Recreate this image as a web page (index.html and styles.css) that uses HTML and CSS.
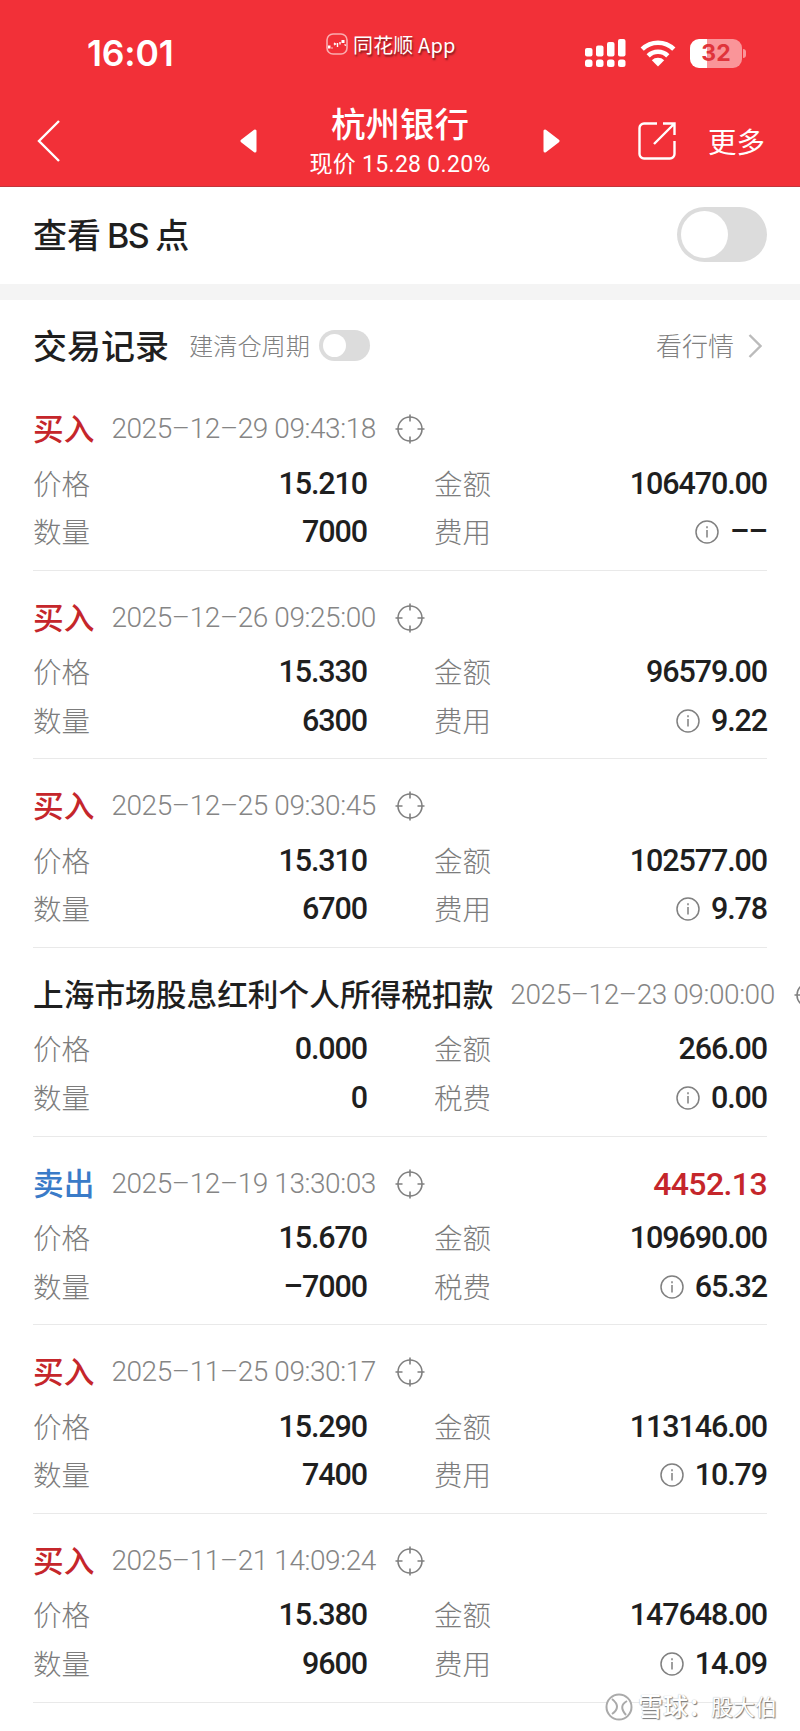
FILE: index.html
```html
<!DOCTYPE html>
<html lang="zh-CN">
<head>
    <meta charset="UTF-8">
    <title>交易记录</title>
    <link rel="stylesheet" href="styles.css">
</head>
<body>
<svg class="defs">
    <symbol id="aim" viewBox="0 0 30 30">
        <circle cx="15" cy="15" r="12"/>
        <path d="M15 .5v7M15 22.5v7M.5 15h7M22.5 15h7"/>
    </symbol>
    <symbol id="info" viewBox="0 0 24 24">
        <circle cx="12" cy="12" r="11"/>
        <path d="M12 10v7.5M12 6.2v2"/>
    </symbol>
</svg>
<header class="header">
    <div class="status">
        <span class="clock">16:01</span>
        <div class="app">
            <svg class="app-icon" viewBox="0 0 22 22"><rect x="1" y="1" width="20" height="20" rx="6" fill="none" stroke="#fff" stroke-opacity=".6" stroke-width="1.6"/><path d="M2 12.5h2.5v3H2zM15.5 7h3v3h-3z" fill="#fff"/><path d="M6 14.5v1M8 10l1.5 1L8 12M11.5 10v4M14 9v2.5M18.5 11.5l1.5 1" fill="none" stroke="#fff" stroke-width="1.4"/></svg>
            <span>同花顺 App</span>
        </div>
        <div class="signals">
            <svg class="cell" viewBox="0 0 41 29" fill="#fff"><rect y="9" width="7.5" height="8.5" rx="2"/><rect x="11" y="6.5" width="7.5" height="11" rx="2"/><rect x="22" y="3" width="7.5" height="14.5" rx="2"/><rect x="33" width="7.5" height="17.5" rx="2"/><rect y="20.5" width="7.5" height="7.5" rx="2.5"/><rect x="11" y="20.5" width="7.5" height="7.5" rx="2.5"/><rect x="22" y="20.5" width="7.5" height="7.5" rx="2.5"/><rect x="33" y="20.5" width="7.5" height="7.5" rx="2.5"/></svg>
            <svg class="wifi" viewBox="0 0 36 27"><path d="M2.2 9.2a22.5 22.5 0 0 1 31.6 0M8.2 15.8a14 14 0 0 1 19.6 0" fill="none" stroke="#fff" stroke-width="4.6"/><path d="M11.8 20.3a9 9 0 0 1 12.4 0L18 26.5z" fill="#fff"/></svg>
            <div class="battery">32</div>
            <i class="battery-cap"></i>
        </div>
    </div>
    <div class="nav">
        <svg class="back" viewBox="0 0 24 42"><path d="M22 1L2 21l20 20"/></svg>
        <svg class="tri" viewBox="0 0 17 24"><path d="M15 2v20L2 12z"/></svg>
        <div class="stock">
            <h1>杭州银行</h1>
            <p>现价 15.28 0.20%</p>
        </div>
        <svg class="tri" viewBox="0 0 17 24"><path d="M2 2v20l13-10z"/></svg>
        <svg class="share" viewBox="0 0 38 38"><path d="M19 1.5H6a4.5 4.5 0 0 0-4.5 4.5v26A4.5 4.5 0 0 0 6 36.5h26a4.5 4.5 0 0 0 4.5-4.5V19M25 1.5h11.5V13M36.5 1.5L16 22"/></svg>
        <span class="more">更多</span>
    </div>
</header>
<div class="bs">
    <h2>查看<span class="latin">BS</span>点</h2>
    <div class="switch"></div>
</div>
<section class="records">
    <div class="records-head">
        <h2>交易记录</h2>
        <span class="cycle">建清仓周期</span>
        <div class="switch small"></div>
        <span class="quote">看行情</span>
        <svg class="arrow" viewBox="0 0 14 24"><path d="M1.5 1l11 11-11 11"/></svg>
    </div>

    <div class="record">
        <div class="title"><b class="buy">买入</b><time>2025–12–29 09:43:18</time><svg class="aim"><use href="#aim"/></svg></div>
        <div class="row"><span>价格</span><em>15.210</em><span>金额</span><em>106470.00</em></div>
        <div class="row"><span>数量</span><em>7000</em><span>费用</span><em><svg class="info"><use href="#info"/></svg>––</em></div>
    </div>
    <div class="record">
        <div class="title"><b class="buy">买入</b><time>2025–12–26 09:25:00</time><svg class="aim"><use href="#aim"/></svg></div>
        <div class="row"><span>价格</span><em>15.330</em><span>金额</span><em>96579.00</em></div>
        <div class="row"><span>数量</span><em>6300</em><span>费用</span><em><svg class="info"><use href="#info"/></svg>9.22</em></div>
    </div>
    <div class="record">
        <div class="title"><b class="buy">买入</b><time>2025–12–25 09:30:45</time><svg class="aim"><use href="#aim"/></svg></div>
        <div class="row"><span>价格</span><em>15.310</em><span>金额</span><em>102577.00</em></div>
        <div class="row"><span>数量</span><em>6700</em><span>费用</span><em><svg class="info"><use href="#info"/></svg>9.78</em></div>
    </div>
    <div class="record">
        <div class="title"><b>上海市场股息红利个人所得税扣款</b><time>2025–12–23 09:00:00</time><svg class="aim"><use href="#aim"/></svg></div>
        <div class="row"><span>价格</span><em>0.000</em><span>金额</span><em>266.00</em></div>
        <div class="row"><span>数量</span><em>0</em><span>税费</span><em><svg class="info"><use href="#info"/></svg>0.00</em></div>
    </div>
    <div class="record">
        <div class="title"><b class="sell">卖出</b><time>2025–12–19 13:30:03</time><svg class="aim"><use href="#aim"/></svg><strong class="profit">4452.13</strong></div>
        <div class="row"><span>价格</span><em>15.670</em><span>金额</span><em>109690.00</em></div>
        <div class="row"><span>数量</span><em>–7000</em><span>税费</span><em><svg class="info"><use href="#info"/></svg>65.32</em></div>
    </div>
    <div class="record">
        <div class="title"><b class="buy">买入</b><time>2025–11–25 09:30:17</time><svg class="aim"><use href="#aim"/></svg></div>
        <div class="row"><span>价格</span><em>15.290</em><span>金额</span><em>113146.00</em></div>
        <div class="row"><span>数量</span><em>7400</em><span>费用</span><em><svg class="info"><use href="#info"/></svg>10.79</em></div>
    </div>
    <div class="record">
        <div class="title"><b class="buy">买入</b><time>2025–11–21 14:09:24</time><svg class="aim"><use href="#aim"/></svg></div>
        <div class="row"><span>价格</span><em>15.380</em><span>金额</span><em>147648.00</em></div>
        <div class="row"><span>数量</span><em>9600</em><span>费用</span><em><svg class="info"><use href="#info"/></svg>14.09</em></div>
    </div>
</section>
<div class="watermark">
    <svg viewBox="0 0 28 28"><circle cx="14" cy="14" r="12.5"/><path d="M7 6q10 8 0 15M22 8q-9 5-1 14"/></svg>
    <span>雪球：</span><span class="author">股大伯</span>
</div>
</body>
</html>
```
FILE: styles.css
```css
* {
    box-sizing: border-box;
}
body {
    margin: 0;
    width: 800px;
    height: 1731px;
    overflow: hidden;
    position: relative;
    background-color: #fff;
    color: #1f1f1f;
    font-family: "Noto Sans CJK SC", sans-serif;
}
h1, h2, p {
    margin: 0;
    font-weight: 500;
}
svg {
    display: block;
    flex: none;
}
.defs {
    position: absolute;
    width: 0;
    height: 0;
}

/* 顶部 */
.header {
    height: 187px;
    background-color: #f23038;
    border-bottom: 1px solid #c2353b;
    color: #fff;
}
.status {
    height: 96px;
    display: flex;
    align-items: flex-start;
}
.clock {
    width: 238px;
    padding-left: 87px;
    margin-top: 34px;
    font: 600 35.5px/40px Inter, sans-serif;
    letter-spacing: -.2px;
}
.app {
    display: flex;
    align-items: center;
    margin: 30px 0 0 88px;
    width: 259px;
    height: 30px;
    font-size: 20px;
    line-height: 30px;
    letter-spacing: .15px;
    text-shadow: 1px 2px 2px rgba(0, 0, 0, .5);
    white-space: nowrap;
}
.app-icon {
    width: 22px;
    height: 22px;
    margin-right: 5px;
    margin-bottom: 2px;
}
.signals {
    display: flex;
    align-items: center;
    height: 29px;
    margin-top: 39px;
}
.cell {
    width: 41px;
    height: 29px;
}
.wifi {
    width: 36px;
    height: 27px;
    margin-left: 14px;
}
.battery {
    width: 52px;
    height: 29px;
    margin-left: 14px;
    border-radius: 9px;
    background: linear-gradient(90deg, #fff 17px, #fa9599 17px);
    color: #e0343b;
    font: 700 23px/29px Inter, sans-serif;
    text-align: center;
}
.battery-cap {
    width: 3px;
    height: 9px;
    margin-left: 1px;
    border-radius: 0 4px 4px 0;
    background-color: #fa9599;
}
.nav {
    height: 90px;
    display: flex;
    align-items: center;
    padding-left: 37px;
}
.nav svg {
    fill: none;
    stroke: #fff;
    stroke-width: 2.4;
}
.nav .back {
    width: 24px;
    height: 42px;
}
.nav .tri {
    width: 17px;
    height: 24px;
    fill: #fff;
    stroke-linejoin: round;
    stroke-width: 3;
    margin-left: 179px;
}
.stock {
    width: 200px;
    margin-left: 43px;
    padding-top: 4px;
    text-align: center;
}
.stock h1 {
    font-size: 34.5px;
    line-height: 42px;
}
.stock p {
    font: 400 23px/43px Roboto, "Noto Sans CJK SC", sans-serif;
    white-space: nowrap;
    letter-spacing: .3px;
}
.nav .stock + .tri {
    margin-left: 43px;
}
.share {
    width: 38px;
    height: 38px;
    margin-left: 78px;
}
.more {
    margin-left: 32px;
    font-size: 28.5px;
    line-height: 40px;
}

/* 开关 */
.bs {
    height: 113px;
    display: flex;
    justify-content: space-between;
    align-items: flex-start;
    padding: 20px 33px 0 33px;
    border-bottom: 16px solid #f4f4f4;
}
h2 {
    font-size: 34px;
    line-height: 54px;
}
.latin {
    margin: 0 7px 0 6px;
    font: 500 34px/1 Inter, sans-serif;
    letter-spacing: -1.5px;
}
.switch {
    width: 90px;
    height: 55px;
    padding: 4px;
    border-radius: 28px;
    background-color: #dcdcdc;
}
.switch::before {
    content: "";
    display: block;
    width: 47px;
    height: 47px;
    border-radius: 50%;
    background-color: #fff;
}
.switch.small {
    width: 51px;
    height: 31px;
    margin-left: 9px;
}
.switch.small::before {
    width: 23px;
    height: 23px;
}

/* 交易记录 */
.records {
    padding: 0 33px;
}
.records-head {
    height: 82px;
    display: flex;
    align-items: center;
    padding-top: 9px;
    color: #808080;
}
.records-head h2 {
    color: #1f1f1f;
    line-height: 50px;
    padding-bottom: 2px;
}
.cycle {
    margin-left: 20px;
    padding-bottom: 3px;
    font-size: 24.2px;
    font-weight: 300;
}
.quote {
    margin-left: auto;
    padding-bottom: 3px;
    font-size: 26px;
    font-weight: 300;
}
.arrow {
    width: 14px;
    height: 24px;
    margin: 0 5px 0 14px;
    fill: none;
    stroke: #bbb;
    stroke-width: 2.4;
}
.record {
    height: 188.66px;
    padding-top: 22px;
    border-bottom: 1px solid #e9e9e9;
}
.title {
    height: 50px;
    display: flex;
    align-items: center;
    white-space: nowrap;
}
.title b {
    padding-bottom: 5px;
    font-size: 30.7px;
    font-weight: 500;
    line-height: 45px;
}
.title .buy {
    color: #c5262b;
}
.title .sell {
    color: #3a7bc8;
}
.title time {
    flex: none;
    width: 268px;
    margin-left: 17px;
    color: #858585;
    font: 300 28px/50px Roboto, sans-serif;
    letter-spacing: -.42px;
}
.aim {
    width: 30px;
    height: 30px;
    margin-left: 16px;
    fill: none;
    stroke: #808080;
    stroke-width: 1.6;
}
.profit {
    margin-left: auto;
    color: #c5262b;
    font: 500 32px/50px Roboto, sans-serif;
    letter-spacing: -.6px;
}
.row {
    height: 48.5px;
    display: grid;
    grid-template-columns: 100px 234px 167px 1fr;
    align-items: center;
    padding-top: 5.5px;
}
.row > span {
    padding-bottom: 3px;
    color: #7c7c7c;
    font-size: 28.5px;
    font-weight: 300;
    line-height: 45px;
}
.row > span:nth-child(3) {
    padding-left: 67px;
}
.row em {
    display: flex;
    justify-content: flex-end;
    align-items: center;
    font: 500 30.5px/48px Roboto, sans-serif;
    letter-spacing: -1.1px;
}
.info {
    width: 24px;
    height: 24px;
    margin-right: 11px;
    fill: none;
    stroke: #808080;
    stroke-width: 1.5;
}

/* 水印 */
.watermark {
    position: absolute;
    left: 605px;
    top: 1689px;
    display: flex;
    align-items: center;
    color: #fff;
    font-size: 25px;
    font-weight: 500;
    line-height: 32px;
    text-shadow: 1px 1px 1px #777, 0 0 1px #aaa;
}
.watermark span {
    width: 73px;
    white-space: nowrap;
    padding-bottom: 3px;
}
.watermark svg {
    width: 28px;
    height: 28px;
    margin-right: 5px;
    fill: #fff;
    stroke: #aaa;
    stroke-width: 2;
}
.watermark .author {
    font-size: 22px;
    font-weight: 400;
}
```
